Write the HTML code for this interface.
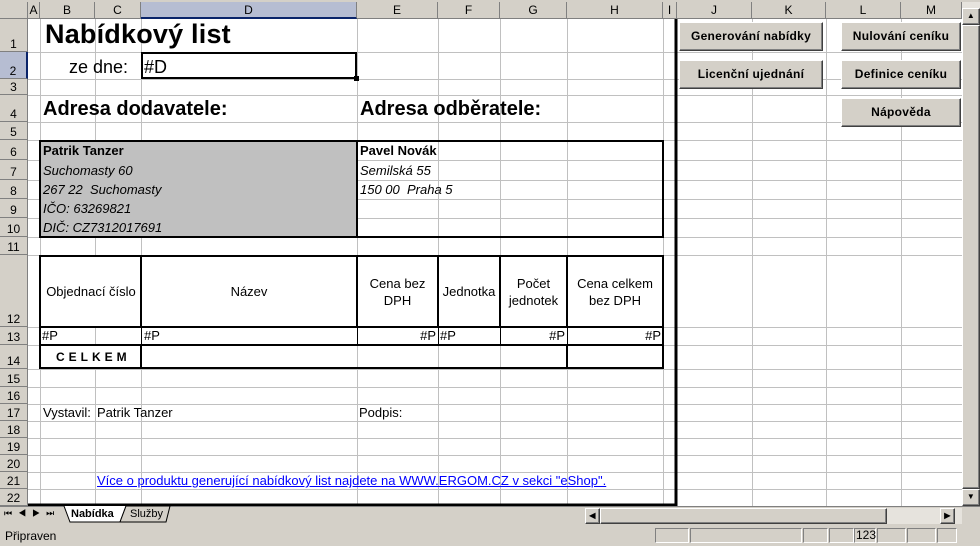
<!DOCTYPE html>
<html><head><meta charset="utf-8"><style>
*{margin:0;padding:0;box-sizing:border-box}
body{width:980px;height:546px;overflow:hidden;background:#d4d0c8;font-family:"Liberation Sans",Arial,sans-serif;position:relative}
.a{position:absolute;white-space:nowrap}
.t{font-size:13px;color:#000}
.ch{position:absolute;top:2px;height:17px;font-size:12px;text-align:center;line-height:17px;background:#d4d0c8;border-right:1px solid #808080;border-bottom:1px solid #808080}
.rh{position:absolute;left:0;width:28px;font-size:12px;text-align:center;background:#d4d0c8;border-right:1px solid #808080;border-bottom:1px solid #808080;display:flex;align-items:flex-end;justify-content:center}
.btn{position:absolute;background:#d4d0c8;border:1px solid;border-color:#fff #404040 #404040 #fff;box-shadow:inset -1px -1px 0 #808080;font-size:12px;font-weight:bold;text-align:center;line-height:26px;letter-spacing:0.3px}
.sp{position:absolute;top:528px;height:15px;border:1px solid;border-color:#808080 #fff #fff #808080}
</style></head><body>
<div class="a" style="left:28px;top:19px;width:934px;height:487px;background:#fff"></div>
<svg class="a" style="left:0;top:0" width="980" height="546">
<g stroke="#c0c0c0" stroke-width="1">
<line x1="40.5" y1="19" x2="40.5" y2="506"/><line x1="95.5" y1="19" x2="95.5" y2="506"/><line x1="141.5" y1="19" x2="141.5" y2="506"/><line x1="357.5" y1="19" x2="357.5" y2="506"/><line x1="438.5" y1="19" x2="438.5" y2="506"/><line x1="500.5" y1="19" x2="500.5" y2="506"/><line x1="567.5" y1="19" x2="567.5" y2="506"/><line x1="663.5" y1="19" x2="663.5" y2="506"/><line x1="752.5" y1="19" x2="752.5" y2="506"/><line x1="826.5" y1="19" x2="826.5" y2="506"/><line x1="901.5" y1="19" x2="901.5" y2="506"/>
<line x1="28" y1="52.5" x2="962" y2="52.5"/><line x1="28" y1="79.5" x2="962" y2="79.5"/><line x1="28" y1="95.5" x2="962" y2="95.5"/><line x1="28" y1="122.5" x2="962" y2="122.5"/><line x1="28" y1="140.5" x2="962" y2="140.5"/><line x1="28" y1="160.5" x2="962" y2="160.5"/><line x1="28" y1="180.5" x2="962" y2="180.5"/><line x1="28" y1="199.5" x2="962" y2="199.5"/><line x1="28" y1="218.5" x2="962" y2="218.5"/><line x1="28" y1="237.5" x2="962" y2="237.5"/><line x1="28" y1="255.5" x2="962" y2="255.5"/><line x1="28" y1="327.5" x2="962" y2="327.5"/><line x1="28" y1="345.5" x2="962" y2="345.5"/><line x1="28" y1="369.5" x2="962" y2="369.5"/><line x1="28" y1="387.5" x2="962" y2="387.5"/><line x1="28" y1="404.5" x2="962" y2="404.5"/><line x1="28" y1="421.5" x2="962" y2="421.5"/><line x1="28" y1="438.5" x2="962" y2="438.5"/><line x1="28" y1="455.5" x2="962" y2="455.5"/><line x1="28" y1="472.5" x2="962" y2="472.5"/><line x1="28" y1="489.5" x2="962" y2="489.5"/>
</g>
<rect x="40" y="140" width="317" height="97" fill="#c0c0c0"/>
<rect x="41" y="257" width="100" height="70" fill="#fff"/>
<rect x="41" y="346" width="100" height="22" fill="#fff"/>
<g fill="none" stroke="#000" stroke-width="2">
<rect x="40" y="141" width="623" height="96"/>
<line x1="357" y1="141" x2="357" y2="237"/>
<rect x="40" y="256" width="623" height="112"/>
<line x1="40" y1="327" x2="663" y2="327"/><line x1="40" y1="345" x2="663" y2="345"/>
<line x1="141" y1="256" x2="141" y2="327"/><line x1="357" y1="256" x2="357" y2="327"/><line x1="438" y1="256" x2="438" y2="327"/><line x1="500" y1="256" x2="500" y2="327"/><line x1="567" y1="256" x2="567" y2="327"/>
<line x1="141" y1="345" x2="141" y2="368"/><line x1="567" y1="345" x2="567" y2="368"/>
<rect x="142" y="53" width="214" height="25"/>
<line x1="676" y1="19" x2="676" y2="506" stroke-width="3"/>
<line x1="28" y1="505" x2="677" y2="505" stroke-width="3"/>
</g>
<g stroke="#000" stroke-width="1">
<line x1="141.5" y1="327" x2="141.5" y2="345"/><line x1="357.5" y1="327" x2="357.5" y2="345"/><line x1="438.5" y1="327" x2="438.5" y2="345"/><line x1="500.5" y1="327" x2="500.5" y2="345"/><line x1="567.5" y1="327" x2="567.5" y2="345"/>
</g>
<rect x="354" y="76" width="5" height="5" fill="#000"/>
</svg>
<div class="a" style="left:0;top:0;width:980px;height:2px;background:#d4d0c8"></div>
<div class="ch" style="left:0;width:28px"></div>
<div class="ch" style="left:28px;width:12px">A</div>
<div class="ch" style="left:40px;width:55px">B</div>
<div class="ch" style="left:95px;width:46px">C</div>
<div class="ch" style="left:141px;width:216px;background:#b6bdd2;border-bottom:2px solid #0a246a">D</div>
<div class="ch" style="left:357px;width:81px">E</div>
<div class="ch" style="left:438px;width:62px">F</div>
<div class="ch" style="left:500px;width:67px">G</div>
<div class="ch" style="left:567px;width:96px">H</div>
<div class="ch" style="left:663px;width:14px">I</div>
<div class="ch" style="left:677px;width:75px">J</div>
<div class="ch" style="left:752px;width:74px">K</div>
<div class="ch" style="left:826px;width:75px">L</div>
<div class="ch" style="left:901px;width:61px">M</div>
<div class="rh" style="top:19px;height:33px">1</div>
<div class="rh" style="top:52px;height:27px;background:#b6bdd2;border-right:2px solid #0a246a">2</div>
<div class="rh" style="top:79px;height:16px">3</div>
<div class="rh" style="top:95px;height:27px">4</div>
<div class="rh" style="top:122px;height:18px">5</div>
<div class="rh" style="top:140px;height:20px">6</div>
<div class="rh" style="top:160px;height:20px">7</div>
<div class="rh" style="top:180px;height:19px">8</div>
<div class="rh" style="top:199px;height:19px">9</div>
<div class="rh" style="top:218px;height:19px">10</div>
<div class="rh" style="top:237px;height:18px">11</div>
<div class="rh" style="top:255px;height:72px">12</div>
<div class="rh" style="top:327px;height:18px">13</div>
<div class="rh" style="top:345px;height:24px">14</div>
<div class="rh" style="top:369px;height:18px">15</div>
<div class="rh" style="top:387px;height:17px">16</div>
<div class="rh" style="top:404px;height:17px">17</div>
<div class="rh" style="top:421px;height:17px">18</div>
<div class="rh" style="top:438px;height:17px">19</div>
<div class="rh" style="top:455px;height:17px">20</div>
<div class="rh" style="top:472px;height:17px">21</div>
<div class="rh" style="top:489px;height:17px">22</div>
<div class="a" style="left:45px;top:19px;font-size:27px;font-weight:bold;letter-spacing:0.2px">Nabídkový list</div>
<div class="a" style="left:69px;top:57px;font-size:18px">ze dne:</div>
<div class="a" style="left:144px;top:57px;font-size:18px">#D</div>
<div class="a" style="left:43px;top:98px;font-size:20px;font-weight:bold">Adresa dodavatele:</div>
<div class="a" style="left:360px;top:98px;font-size:20px;font-weight:bold">Adresa odběratele:</div>
<div class="a t" style="left:43px;top:143px;font-weight:bold">Patrik Tanzer</div>
<div class="a t" style="left:43px;top:163px;font-style:italic">Suchomasty 60</div>
<div class="a t" style="left:43px;top:182px;font-style:italic">267 22&nbsp; Suchomasty</div>
<div class="a t" style="left:43px;top:201px;font-style:italic">IČO: 63269821</div>
<div class="a t" style="left:43px;top:220px;font-style:italic">DIČ: CZ7312017691</div>
<div class="a t" style="left:360px;top:143px;font-weight:bold">Pavel Novák</div>
<div class="a t" style="left:360px;top:163px;font-style:italic">Semilská 55</div>
<div class="a t" style="left:360px;top:182px;font-style:italic">150 00&nbsp; Praha 5</div>
<div class="a t" style="left:41px;top:284px;width:100px;text-align:center">Objednací číslo</div>
<div class="a t" style="left:141px;top:284px;width:216px;text-align:center">Název</div>
<div class="a t" style="left:357px;top:275px;width:81px;text-align:center;line-height:17px">Cena bez<br>DPH</div>
<div class="a t" style="left:438px;top:284px;width:62px;text-align:center">Jednotka</div>
<div class="a t" style="left:500px;top:275px;width:67px;text-align:center;line-height:17px">Počet<br>jednotek</div>
<div class="a t" style="left:567px;top:275px;width:96px;text-align:center;line-height:17px">Cena celkem<br>bez DPH</div>
<div class="a t" style="left:42px;top:328px">#P</div>
<div class="a t" style="left:144px;top:328px">#P</div>
<div class="a t" style="left:357px;top:328px;width:79px;text-align:right">#P</div>
<div class="a t" style="left:440px;top:328px">#P</div>
<div class="a t" style="left:500px;top:328px;width:65px;text-align:right">#P</div>
<div class="a t" style="left:567px;top:328px;width:94px;text-align:right">#P</div>
<div class="a" style="left:56px;top:350px;font-size:12px;font-weight:bold;letter-spacing:4px">CELKEM</div>
<div class="a t" style="left:43px;top:405px">Vystavil:</div>
<div class="a t" style="left:97px;top:405px">Patrik Tanzer</div>
<div class="a t" style="left:359px;top:405px">Podpis:</div>
<div class="a t" style="left:97px;top:473px;color:#00f;text-decoration:underline">Více o produktu generující nabídkový list najdete na WWW.ERGOM.CZ v sekci "eShop".</div>
<div class="btn" style="left:679px;top:22px;width:144px;height:29px">Generování nabídky</div>
<div class="btn" style="left:679px;top:60px;width:144px;height:29px">Licenční ujednání</div>
<div class="btn" style="left:841px;top:22px;width:120px;height:29px">Nulování ceníku</div>
<div class="btn" style="left:841px;top:60px;width:120px;height:29px">Definice ceníku</div>
<div class="btn" style="left:841px;top:98px;width:120px;height:29px">Nápověda</div>
<div class="a" style="left:962px;top:2px;width:18px;height:504px;background:#e6e3dd"></div>
<div class="btn" style="left:962px;top:8px;width:18px;height:17px;line-height:14px;font-size:8px">▲</div>
<div class="btn" style="left:962px;top:25px;width:18px;height:464px"></div>
<div class="btn" style="left:962px;top:489px;width:18px;height:17px;line-height:14px;font-size:8px">▼</div>
<div class="a" style="left:0;top:506px;width:980px;height:18px;background:#d4d0c8;border-top:1px solid #808080"></div>
<div class="a" style="left:4px;top:508px;font-size:9px;letter-spacing:6px">⏮◀▶⏭</div>
<svg class="a" style="left:62px;top:506px" width="120" height="18"><path d="M2 0 L8 16 L58 16 L64 0" fill="#fff" stroke="#000"/><path d="M58 16 L64 0 L108 0 L104 16 Z" fill="#d4d0c8" stroke="#000"/></svg>
<div class="a" style="left:71px;top:508px;font-size:11px;font-weight:bold">Nabídka</div>
<div class="a" style="left:130px;top:508px;font-size:11px">Služby</div>
<div class="a" style="left:585px;top:508px;width:377px;height:16px;background:#e6e3dd"></div>
<div class="btn" style="left:585px;top:508px;width:15px;height:16px;font-size:8px;line-height:13px">◀</div>
<div class="btn" style="left:600px;top:508px;width:287px;height:16px"></div>
<div class="btn" style="left:940px;top:508px;width:15px;height:16px;font-size:8px;line-height:13px">▶</div>
<div class="a" style="left:5px;top:529px;font-size:12px">Připraven</div>
<div class="sp" style="left:655px;width:34px"></div>
<div class="sp" style="left:690px;width:112px"></div>
<div class="sp" style="left:803px;width:25px"></div>
<div class="sp" style="left:829px;width:25px"></div>
<div class="sp" style="left:854px;width:22px"></div>
<div class="sp" style="left:877px;width:29px"></div>
<div class="sp" style="left:907px;width:29px"></div>
<div class="sp" style="left:937px;width:20px"></div>
<div class="a" style="left:856px;top:528px;font-size:12px">123</div>
</body></html>
